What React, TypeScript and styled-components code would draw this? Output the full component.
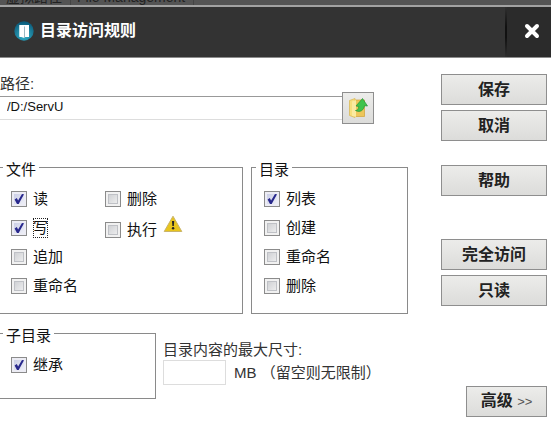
import React from "react";
import styled, { createGlobalStyle, css } from "styled-components";

const GlobalStyle = createGlobalStyle`
  *, *::before, *::after { box-sizing: border-box; }
  body {
    margin: 0;
    background: #fff;
    color: #111;
    font-family: "Liberation Sans", "Noto Sans CJK SC", sans-serif;
    font-size: 15px;
    line-height: 20px;
    overflow-x: hidden;
  }
  button, input { font: inherit; color: inherit; margin: 0; }
`;

const Backdrop = styled.div`
  display: flex;
  align-items: flex-end;
  height: 5px;
  overflow: hidden;
  background: #545454;
  color: #222;
  font-size: 14px;
  line-height: 16px;
  white-space: nowrap;
`;

const Tab = styled.span`
  padding: 0 8px 0 6px;
  border-right: 1px solid #444;
`;

const Header = styled.header`
  display: flex;
  align-items: stretch;
  height: 53px;
  border-top: 2px solid #a2a2a2;
  border-bottom: 1px solid #8c8c8c;
  background: #333;
  color: #fff;
`;

const Title = styled.h1`
  display: flex;
  flex: 1;
  align-items: center;
  gap: 6px;
  margin: 0;
  padding: 0 0 2px 14px;
  font-size: 16px;
  font-weight: 700;
`;

const CloseButton = styled.button`
  display: grid;
  place-items: center;
  width: 46px;
  padding: 0 0 2px 6px;
  border: 0;
  border-left: 2px solid;
  border-image: linear-gradient(#303030, #111 40%, #111 60%, #303030) 1;
  background: #2b2b2b;
`;

const Body = styled.main`
  display: flex;
  gap: 33px;
  padding: 16px 4px 16px 0;
`;

const Form = styled.form`
  flex: 1;
  min-width: 0;
`;

const PathLabel = styled.label`
  display: block;
  height: 18px;
  color: #333;
`;

const PathRow = styled.div`
  display: flex;
  align-items: center;
  margin: 0 34px 30px 0;
`;

const PathInput = styled.input`
  flex: 1;
  min-width: 0;
  height: 24px;
  padding: 0 7px 4px;
  border: 0;
  border-top: 1px solid #999;
  border-bottom: 1px solid #ddd;
  background: #fff;
  font-size: 13px;
`;

const buttonFace = css`
  border: 1px solid #8e8e8e;
  background: linear-gradient(#ececea, #dcdcda);
`;

const BrowseButton = styled.button`
  display: grid;
  place-items: center;
  width: 32px;
  height: 32px;
  padding: 0;
  ${buttonFace}
`;

const Groups = styled.div`
  display: grid;
  grid-template-columns: 243fr 157fr;
  gap: 8px;
  margin-bottom: 6px;
`;

const LowerGroups = styled.div`
  display: flex;
  gap: 7px;
`;

const Group = styled.fieldset<{ $open?: boolean }>`
  min-width: 0;
  margin: 0;
  padding: 4px 0 13px ${(p) => (p.$open ? 11 : 12)}px;
  border: 1px solid #8a8a8a;
  ${(p) => p.$open && "border-left: 0;"}
`;

const SubGroup = styled(Group)`
  flex: 0 0 156px;
  padding-bottom: 19px;
`;

const Legend = styled.legend`
  margin-left: -8px;
  padding: 6px 3px 0;
`;

const Columns = styled.div`
  display: flex;
`;

const Column = styled.div<{ $gap?: number; $width?: number }>`
  display: flex;
  flex-direction: column;
  gap: ${(p) => p.$gap ?? 0}px;
  ${(p) => p.$width && `width: ${p.$width}px;`}
`;

const CheckLabel = styled.label`
  display: flex;
  align-items: center;
  gap: 6px;
  height: 29px;
  white-space: nowrap;
`;

const CheckCell = styled.span`
  display: grid;
  width: 16px;
  height: 16px;
  > * { grid-area: 1 / 1; }
`;

const CheckInput = styled.input`
  appearance: none;
  width: 16px;
  height: 16px;
  border: 1px solid #8b8b8b;
  background: linear-gradient(135deg, #c6c8cc, #f6f6f6);
  box-shadow: inset 0 0 0 2px #f1f1f1, inset 0 0 0 3px #bfc1c6;
  &:checked { background: linear-gradient(135deg, #c4c8e2, #f4f5fb); box-shadow: inset 0 0 0 2px #ececf4; }
  & + svg { display: none; pointer-events: none; }
  &:checked + svg { display: block; }
`;

const CheckText = styled.span<{ $focused?: boolean }>`
  ${(p) => p.$focused && "outline: 1px dotted #222; outline-offset: -1px;"}
`;

const Warning = styled.span`
  display: block;
  height: 20px;
  margin-left: 6px;
`;

const SizeArea = styled.div`
  display: flex;
  flex-direction: column;
  padding-top: 20px;
  color: #333;
  white-space: nowrap;
`;

const SizeRow = styled.div`
  display: flex;
  align-items: center;
  gap: 8px;
`;

const SizeInput = styled.input`
  width: 63px;
  height: 25px;
  border: 1px solid #ddd;
  background: #fff;
`;

const Side = styled.aside`
  display: flex;
  flex: 0 0 106px;
  flex-direction: column;
  align-items: stretch;
`;

const ActionButton = styled.button<{ $before?: number; $small?: boolean }>`
  height: 31px;
  margin-top: ${(p) => p.$before ?? 0}px;
  padding: 0;
  ${buttonFace}
  color: #222;
  font-size: 16px;
  font-weight: 700;
  ${(p) => p.$small && "width: 81px; align-self: flex-end;"}
`;

const Chevrons = styled.span`
  color: #555;
  font-size: 13px;
  font-weight: 400;
`;

function Check({ label, checked, focused }: { label: string; checked?: boolean; focused?: boolean }) {
  return (
    <CheckLabel>
      <CheckCell>
        <CheckInput type="checkbox" defaultChecked={checked} />
        <svg width="16" height="16" viewBox="0 0 16 16" aria-hidden="true">
          <path d="M3.600 8.400 5.800 7l1.300 2.400L11 3l2 .2-5.300 9.800H6z" fill="#28288c" />
        </svg>
      </CheckCell>
      <CheckText $focused={focused}>{label}</CheckText>
    </CheckLabel>
  );
}

function LogoIcon() {
  return (
    <svg width="20" height="20" viewBox="0 0 20 20" aria-hidden="true">
      <defs>
        <radialGradient id="globe" cx="50%" cy="75%" r="70%">
          <stop offset="0" stopColor="#35b5cc" />
          <stop offset="1" stopColor="#0d5d7c" />
        </radialGradient>
      </defs>
      <circle cx="10" cy="10" r="9.7" fill="url(#globe)" />
      <path d="M5.500 4H15v12H5.500z" fill="#fff" />
      <path d="M5.500 4 10.500 5.500V17l-5-1.500z" fill="#fff" />
      <path d="M10.500 5.500V17" stroke="#9db9c2" strokeWidth="1" />
    </svg>
  );
}

function FolderUpIcon() {
  return (
    <svg width="22" height="22" viewBox="0 0 22 22" aria-hidden="true">
      <path d="M7 3h10.500v16.500H7z" fill="#edc65a" stroke="#d0a238" strokeWidth=".7" />
      <path d="M2.500 3.500 8 1.500v19l-5.500-2z" fill="#f7df7d" stroke="#d9b44e" strokeWidth=".7" />
      <path d="M5 4.500 9 3v17l-4-1.200z" fill="#fbeaa0" />
      <path d="M8.500 13.500c2 0 3-1.500 3.300-4L9 9l6.500-7.500L20.500 9l-3-.3c-.8 4.300-4 7.300-9 4.800z" fill="#3fc34b" stroke="#249337" strokeWidth=".7" />
    </svg>
  );
}

function WarningIcon() {
  return (
    <svg width="20" height="18" viewBox="0 0 20 18" role="img" aria-label="警告">
      <path d="M10 1.200 18.800 16.500H1.200z" fill="#e9c51d" stroke="#c9b46a" strokeLinejoin="round" />
      <path d="M9 6h2.200l-.4 5H9.400z" fill="#222" />
      <circle cx="10.100" cy="13.300" r="1.200" fill="#222" />
    </svg>
  );
}

export default function App() {
  return (
    <>
      <GlobalStyle />
      <Backdrop aria-hidden="true">
        <Tab>虚拟路径</Tab>
        <Tab>File Management</Tab>
      </Backdrop>
      <Header>
        <Title>
          <LogoIcon />
          目录访问规则
        </Title>
        <CloseButton type="button" aria-label="关闭">
          <svg width="16" height="16" viewBox="0 0 16 16" aria-hidden="true">
            <path d="m3 3 10 10M13 3 3 13" stroke="#fff" strokeWidth="4" strokeLinecap="round" />
          </svg>
        </CloseButton>
      </Header>
      <Body>
        <Form>
          <PathLabel htmlFor="path">路径:</PathLabel>
          <PathRow>
            <PathInput id="path" defaultValue="/D:/ServU" />
            <BrowseButton type="button" aria-label="浏览">
              <FolderUpIcon />
            </BrowseButton>
          </PathRow>
          <Groups>
            <Group $open>
              <Legend>文件</Legend>
              <Columns>
                <Column $width={94}>
                  <Check label="读" checked />
                  <Check label="写" checked focused />
                  <Check label="追加" />
                  <Check label="重命名" />
                </Column>
                <Column $gap={2}>
                  <Check label="删除" />
                  <Columns>
                    <Check label="执行" />
                    <Warning>
                      <WarningIcon />
                    </Warning>
                  </Columns>
                </Column>
              </Columns>
            </Group>
            <Group>
              <Legend>目录</Legend>
              <Column>
                <Check label="列表" checked />
                <Check label="创建" />
                <Check label="重命名" />
                <Check label="删除" />
              </Column>
            </Group>
          </Groups>
          <LowerGroups>
            <SubGroup $open>
              <Legend>子目录</Legend>
              <Check label="继承" checked />
            </SubGroup>
            <SizeArea>
              <label htmlFor="max-size">目录内容的最大尺寸:</label>
              <SizeRow>
                <SizeInput id="max-size" />
                <span>MB （留空则无限制）</span>
              </SizeRow>
            </SizeArea>
          </LowerGroups>
        </Form>
        <Side>
          <ActionButton type="button">保存</ActionButton>
          <ActionButton type="button" $before={5}>取消</ActionButton>
          <ActionButton type="button" $before={24}>帮助</ActionButton>
          <ActionButton type="button" $before={43}>完全访问</ActionButton>
          <ActionButton type="button" $before={5}>只读</ActionButton>
          <ActionButton type="button" $before={80} $small>
            高级 <Chevrons>&gt;&gt;</Chevrons>
          </ActionButton>
        </Side>
      </Body>
    </>
  );
}
